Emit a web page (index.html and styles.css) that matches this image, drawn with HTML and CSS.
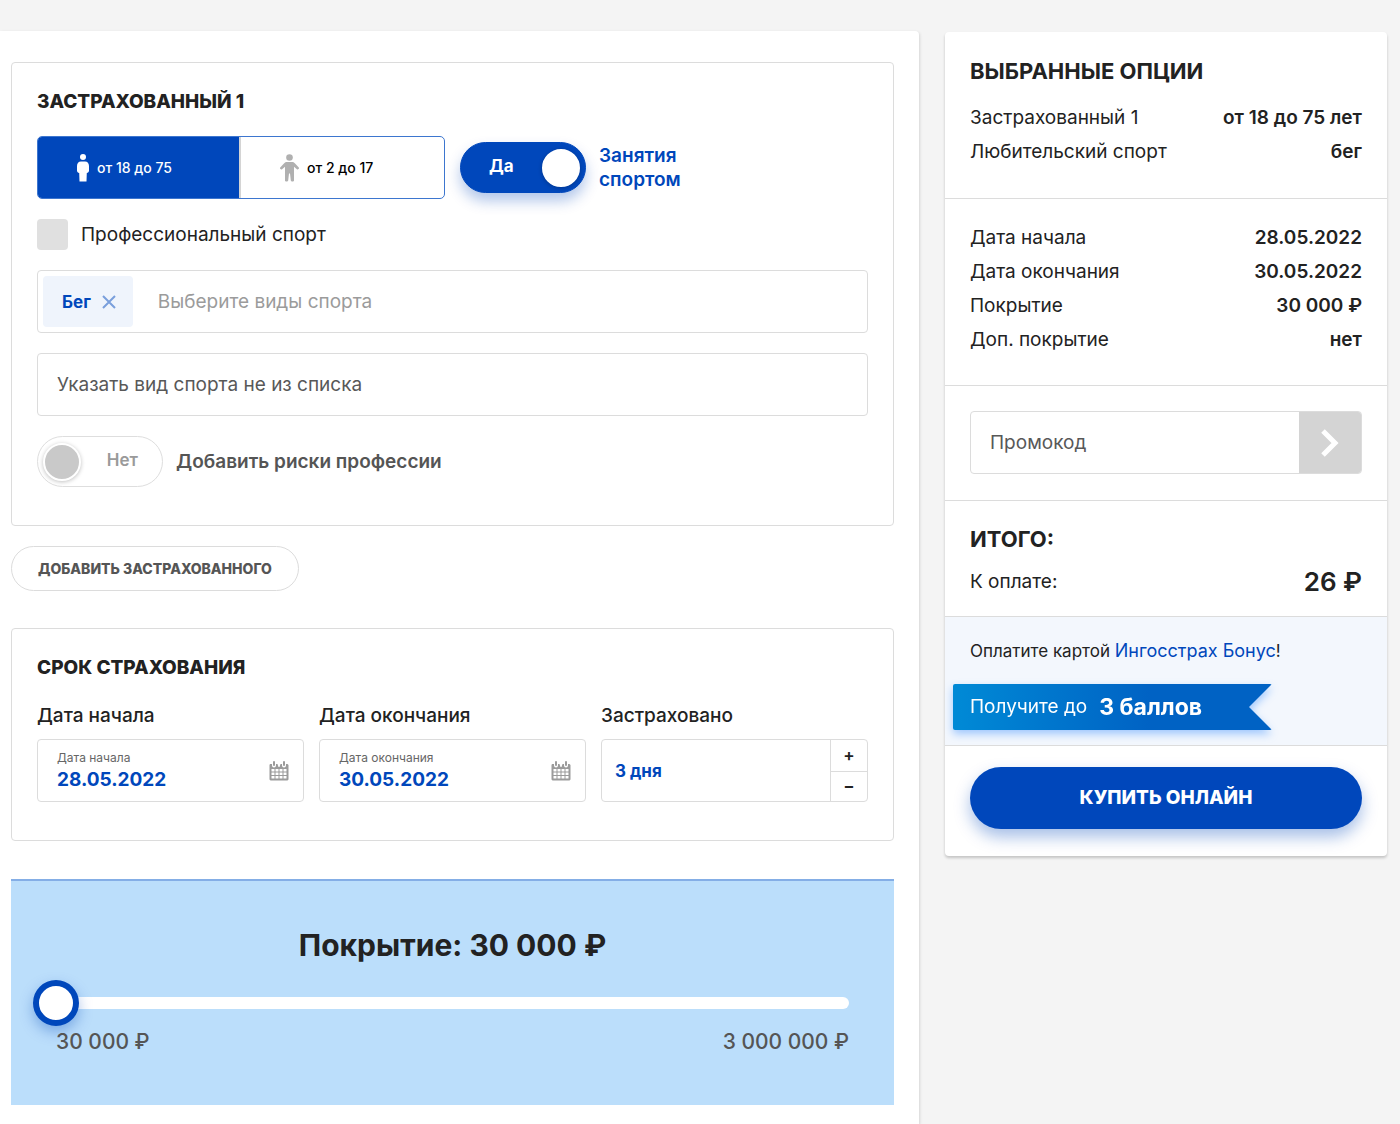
FILE: index.html
```html
<!DOCTYPE html>
<html lang="ru">
<head>
<meta charset="utf-8">
<meta name="viewport" content="width=device-width, initial-scale=1">
<title>Страхование путешественников</title>
<link rel="stylesheet" href="styles.css">
</head>
<body>
<div class="page">
  <main class="panel">
    <section class="card insured">
      <h2 class="card-title">ЗАСТРАХОВАННЫЙ 1</h2>
      <div class="insured-row">
        <div class="segment" role="radiogroup" aria-label="Возраст">
          <label class="segment-item">
            <input class="segment-input" type="radio" name="age" checked>
            <svg class="icon-adult" viewBox="0 0 12 28" width="12" height="28" aria-hidden="true"><circle cx="6" cy="3" r="3"/><path d="M4 7.500h4c2.500 0 4 2 4 4.500v4.500c0 1.500-1 2.500-2.200 2.500L9.500 27.500h-7L2.200 19C1 19 0 18 0 16.500V12c0-2.500 1.500-4.500 4-4.500z"/></svg>
            <span>от 18 до 75</span>
          </label>
          <label class="segment-item">
            <input class="segment-input" type="radio" name="age">
            <svg class="icon-child" viewBox="0 0 19 28" width="19" height="28" aria-hidden="true"><circle cx="9.500" cy="3.500" r="3.300"/><path d="M7 8h5c1.200 0 2 .5 2.800 1.200l4 4.300c.8 1-.8 2.600-1.900 1.700L14 12.800V26.500c0 1.400-3 1.400-3.200 0L10 19.500H9l-.8 7c-.2 1.400-3.200 1.400-3.200 0V12.800l-2.900 2.400c-1.100.9-2.700-.7-1.900-1.700l4-4.300C5 8.500 5.800 8 7 8z"/></svg>
            <span>от 2 до 17</span>
          </label>
        </div>
        <label class="toggle-field toggle-field-on">
          <span class="toggle">
            <input class="toggle-input" type="checkbox" role="switch" checked>
            <span class="toggle-text">Да</span>
          </span>
          <span class="toggle-caption">Занятия<br>спортом</span>
        </label>
      </div>
      <label class="check">
        <input class="check-input" type="checkbox">
        <span>Профессиональный спорт</span>
      </label>
      <div class="field tags">
        <button class="tag" type="button">Бег
          <svg viewBox="0 0 14 14" width="14" height="14" aria-hidden="true"><path d="M1 1l12 12M13 1L1 13"/></svg>
        </button>
        <input class="field-input" type="text" placeholder="Выберите виды спорта" aria-label="Виды спорта">
      </div>
      <div class="field">
        <input class="field-input field-input-strong" type="text" placeholder="Указать вид спорта не из списка" aria-label="Указать вид спорта не из списка">
      </div>
      <label class="toggle-field">
        <span class="toggle">
          <input class="toggle-input" type="checkbox" role="switch">
          <span class="toggle-text">Нет</span>
        </span>
        <span class="toggle-caption">Добавить риски профессии</span>
      </label>
    </section>

    <button class="add-button" type="button">ДОБАВИТЬ ЗАСТРАХОВАННОГО</button>

    <section class="card term">
      <h2 class="card-title">СРОК СТРАХОВАНИЯ</h2>
      <div class="term-grid">
        <div class="term-col">
          <h3 class="term-name">Дата начала</h3>
          <div class="field date">
            <div class="date-body">
              <label class="date-label" for="start">Дата начала</label>
              <input class="date-input" id="start" type="text" value="28.05.2022">
            </div>
            <svg class="calendar" viewBox="0 0 20 20" width="20" height="20" aria-hidden="true"><use href="#calendar"/></svg>
          </div>
        </div>
        <div class="term-col">
          <h3 class="term-name">Дата окончания</h3>
          <div class="field date">
            <div class="date-body">
              <label class="date-label" for="end">Дата окончания</label>
              <input class="date-input" id="end" type="text" value="30.05.2022">
            </div>
            <svg class="calendar" viewBox="0 0 20 20" width="20" height="20" aria-hidden="true"><use href="#calendar"/></svg>
          </div>
        </div>
        <div class="term-col">
          <h3 class="term-name"><label for="days">Застраховано</label></h3>
          <div class="field days">
            <input class="days-input" id="days" type="text" value="3 дня">
            <div class="days-steps">
              <button class="step" type="button" aria-label="Больше">+</button>
              <button class="step" type="button" aria-label="Меньше">−</button>
            </div>
          </div>
        </div>
      </div>
    </section>

    <section class="coverage">
      <h2 class="coverage-title"><label for="sum">Покрытие: 30 000 ₽</label></h2>
      <input class="slider" id="sum" type="range" min="30000" max="3000000" value="30000">
      <div class="coverage-scale"><span>30 000 ₽</span><span>3 000 000 ₽</span></div>
    </section>
  </main>

  <aside class="summary">
    <section class="part options">
      <h2 class="summary-title">ВЫБРАННЫЕ ОПЦИИ</h2>
      <dl class="rows">
        <div class="row"><dt>Застрахованный 1</dt><dd>от 18 до 75 лет</dd></div>
        <div class="row"><dt>Любительский спорт</dt><dd>бег</dd></div>
      </dl>
    </section>
    <section class="part details">
      <dl class="rows">
        <div class="row"><dt>Дата начала</dt><dd>28.05.2022</dd></div>
        <div class="row"><dt>Дата окончания</dt><dd>30.05.2022</dd></div>
        <div class="row"><dt>Покрытие</dt><dd>30 000 ₽</dd></div>
        <div class="row"><dt>Доп. покрытие</dt><dd>нет</dd></div>
      </dl>
    </section>
    <section class="part promo">
      <div class="field promo-field">
        <input class="field-input field-input-strong" type="text" placeholder="Промокод" aria-label="Промокод">
        <button class="promo-button" type="button" aria-label="Применить">
          <svg viewBox="0 0 18 28" width="18" height="28" aria-hidden="true"><path d="M2 2l12 12L2 26"/></svg>
        </button>
      </div>
    </section>
    <section class="part total">
      <h2 class="summary-title">ИТОГО:</h2>
      <dl class="rows">
        <div class="row"><dt>К оплате:</dt><dd class="price">26 ₽</dd></div>
      </dl>
    </section>
    <section class="part bonus">
      <p class="bonus-text">Оплатите картой <a class="bonus-link" href="#">Ингосстрах Бонус</a>!</p>
      <div class="ribbon-shadow">
        <p class="ribbon">Получите до <strong class="ribbon-points">3 баллов</strong></p>
      </div>
    </section>
    <div class="buy">
      <button class="buy-button" type="button">КУПИТЬ ОНЛАЙН</button>
    </div>
  </aside>
</div>

<svg class="sprite" width="0" height="0" aria-hidden="true">
  <symbol id="calendar" viewBox="0 0 20 20">
    <path fill="#9b9b9b" fill-rule="evenodd" d="M1 3h2v1.500a2 2 0 0 0 4 0V3h1.500v0l1 3h1l1-3H13v1.500a2 2 0 0 0 4 0V3h1.500L19.500 4v14.500l-1 1h-17l-1-1V4zM2.500 8v2.500h3V8zm4 0v2.500h3V8zm4 0v2.500h3V8zm4 0v2.500h3V8zm-12 3.500V14h3v-2.500zm4 0V14h3v-2.500zm4 0V14h3v-2.500zm4 0V14h3v-2.500zm-12 3.500v2.500h3V15zm4 0v2.500h3V15zm4 0v2.500h3V15zm4 0v2.500h3V15z"/>
    <rect x="4" y="0" width="2" height="5" rx="1" fill="#9b9b9b"/>
    <rect x="14" y="0" width="2" height="5" rx="1" fill="#9b9b9b"/>
  </symbol>
</svg>
</body>
</html>
```
FILE: styles.css
```css
*, ::before {
  box-sizing: border-box;
}

body {
  margin: 0;
  background: #f4f4f4;
  color: #222;
  font: 400 19px/24px Inter, "Open Sans", "Liberation Sans", sans-serif;
}

h2, h3, p, dl, dd {
  margin: 0;
}

input, button {
  margin: 0;
  border: 0;
  padding: 0;
  background: none;
  color: inherit;
  font: inherit;
}

button {
  cursor: pointer;
}

.sprite {
  position: absolute;
}

.page {
  display: grid;
  grid-template-columns: minmax(0, 1fr) 442px;
  align-items: start;
  gap: 26px;
  padding: 31px 13px 0 0;
}

.panel {
  display: flex;
  flex-direction: column;
  min-height: calc(100vh - 31px);
  padding: 31px 25px 18px 11px;
  background: #fff;
  border-radius: 0 4px 0 0;
  box-shadow: 1px 1px 3px rgba(0, 0, 0, .12);
}

/* Cards */

.card {
  border: 1px solid #dcdcdc;
  border-radius: 4px;
  padding: 27px 25px 38px;
}

.card-title {
  font-size: 19px;
  line-height: 24px;
  font-weight: 800;
}

.insured {
  display: flex;
  flex-direction: column;
  align-items: stretch;
  gap: 20px;
}

.insured-row {
  display: flex;
  align-items: center;
  gap: 15px;
  padding-top: 2px;
}

/* Age switch */

.segment {
  display: grid;
  grid-template-columns: 1fr 1fr;
  width: 408px;
  height: 63px;
  border: 1px solid #3d76cf;
  border-radius: 5px;
  overflow: hidden;
}

.segment-item {
  display: flex;
  align-items: center;
  gap: 8px;
  padding-left: 39px;
  color: #000;
  font-size: 14px;
  font-weight: 500;
  cursor: pointer;
}

.segment-item:first-child {
  border-right: 2px solid #d4d4d4;
}

.segment-item:has(:checked) {
  background: #0047bb;
  background-clip: padding-box;
  color: #fff;
}

.segment-input {
  position: absolute;
  opacity: 0;
}

.icon-adult {
  fill: #fff;
}

.icon-child {
  fill: #b0b0b0;
}

/* Toggles */

.toggle-field {
  display: flex;
  align-items: center;
  gap: 13px;
  color: #555;
  font-weight: 600;
  cursor: pointer;
}

.toggle {
  display: grid;
  align-items: center;
  width: 126px;
  height: 51px;
}

.toggle-input {
  grid-area: 1 / 1;
  display: flex;
  align-items: center;
  width: 126px;
  height: 51px;
  padding: 0 5px;
  appearance: none;
  border: 1px solid #dedede;
  border-radius: 26px;
  background: #fff;
}

.toggle-input::before {
  content: "";
  width: 38px;
  height: 38px;
  border: 2px solid #fff;
  border-radius: 50%;
  background: #c9c9c9;
  box-shadow: 0 1px 4px rgba(0, 0, 0, .25);
}

.toggle-input:checked {
  justify-content: flex-end;
  border-color: #0047bb;
  background: #0047bb;
  box-shadow: 0 8px 14px rgba(0, 71, 187, .3);
}

.toggle-input:checked::before {
  background: #fff;
}

.toggle-text {
  grid-area: 1 / 1;
  z-index: 1;
  justify-self: end;
  padding: 0 25px 3px 0;
  color: #9a9a9a;
  font-size: 17px;
  pointer-events: none;
}

.toggle-input:checked + .toggle-text {
  justify-self: start;
  padding-left: 29px;
  color: #fff;
  font-weight: 700;
}

.toggle-field-on {
  color: #0047bb;
}

/* Checkbox */

.check {
  display: flex;
  align-items: center;
  gap: 13px;
}

.check-input {
  width: 31px;
  height: 31px;
  appearance: none;
  border-radius: 4px;
  background: #e0e0e0;
}

.check-input:checked {
  background: #0047bb;
}

/* Fields */

.field {
  display: flex;
  height: 63px;
  border: 1px solid #dcdcdc;
  border-radius: 4px;
  background: #fff;
}

.field-input {
  flex: 1;
  min-width: 0;
  padding: 0 19px;
  outline: 0;
}

.field-input::placeholder {
  color: #9b9b9b;
  opacity: 1;
}

.field-input-strong::placeholder {
  color: #585858;
}

.tags {
  align-items: center;
  gap: 6px;
  padding-left: 5px;
}

.tag {
  display: flex;
  align-items: center;
  gap: 11px;
  height: 51px;
  padding: 0 17px 0 19px;
  border-radius: 4px;
  background: #eff4fc;
  color: #0047bb;
  font-size: 17px;
  font-weight: 700;
}

.tag svg {
  fill: none;
  stroke: #7a9fdc;
  stroke-width: 2;
}

.add-button {
  align-self: flex-start;
  height: 45px;
  margin: 20px 0 37px;
  padding: 0 26px;
  border: 1px solid #dcdcdc;
  border-radius: 23px;
  color: #555;
  font-size: 14px;
  font-weight: 800;
}

/* Insurance term */

.term-grid {
  display: grid;
  grid-template-columns: repeat(3, minmax(0, 1fr));
  gap: 15px;
  margin-top: 24px;
}

.term-col {
  display: flex;
  flex-direction: column;
  gap: 11px;
}

.term-name {
  font-size: 19px;
  line-height: 24px;
  font-weight: 500;
}

.date {
  align-items: center;
  padding: 0 14px 0 19px;
}

.date-body {
  display: flex;
  flex: 1;
  flex-direction: column;
  min-width: 0;
  padding-bottom: 2px;
}

.date-label {
  color: #666;
  font-size: 12px;
  line-height: 20px;
}

.date-input {
  width: 100%;
  height: 24px;
  color: #0047bb;
  font-weight: 700;
}

.days-input {
  flex: 1;
  min-width: 0;
  padding-left: 13px;
  color: #0047bb;
  font-size: 17px;
  font-weight: 700;
}

.days-steps {
  display: grid;
  grid-template-rows: 1fr 1fr;
  width: 37px;
  border-left: 1px solid #dcdcdc;
}

.step {
  font-size: 17px;
  line-height: 20px;
  font-weight: 600;
}

.step + .step {
  border-top: 1px solid #dcdcdc;
}

/* Coverage */

.coverage {
  display: flex;
  flex-direction: column;
  margin-top: 38px;
  padding: 46px 45px 51px;
  border-top: 2px solid #84aee6;
  background: #bbdefb;
}

.coverage-title {
  font-size: 30px;
  line-height: 36px;
  font-weight: 700;
  text-align: center;
}

.slider {
  height: 46px;
  margin: 17px 0 0 -23px;
  appearance: none;
}

.slider::-webkit-slider-runnable-track {
  height: 12px;
  border-radius: 6px;
  background: linear-gradient(to right, transparent 23px, #fff 23px);
}

.slider::-webkit-slider-thumb {
  width: 46px;
  height: 46px;
  margin-top: -17px;
  appearance: none;
  border: 6px solid #0047bb;
  border-radius: 50%;
  background: #fff;
  box-shadow: 0 6px 14px rgba(0, 71, 187, .35);
}

.coverage-scale {
  display: flex;
  justify-content: space-between;
  margin-top: 4px;
  color: #555;
  font-size: 21px;
  line-height: 24px;
  font-weight: 500;
}

/* Summary */

.summary {
  margin-top: 1px;
  border-radius: 4px;
  background: #fff;
  box-shadow: 0 2px 3px rgba(0, 0, 0, .2);
}

.part {
  padding: 0 25px;
  border-bottom: 1px solid #dcdcdc;
}

.summary-title {
  font-size: 22px;
  line-height: 28px;
  font-weight: 700;
}

.row {
  display: flex;
  align-items: center;
  justify-content: space-between;
  line-height: 34px;
}

.row dd {
  font-weight: 600;
}

.options {
  padding-top: 25px;
  padding-bottom: 29px;
}

.options .rows {
  margin-top: 16px;
}

.details {
  padding-top: 22px;
  padding-bottom: 28px;
}

.promo {
  padding-top: 25px;
  padding-bottom: 26px;
}

.promo-field {
  overflow: hidden;
}

.promo-button {
  display: flex;
  align-items: center;
  justify-content: center;
  width: 62px;
  background: #d4d4d4;
}

.promo-button svg {
  fill: none;
  stroke: #fff;
  stroke-width: 5;
}

.total {
  padding-top: 24px;
  padding-bottom: 17px;
}

.total .rows {
  margin-top: 12px;
}

.total .price {
  font-size: 26px;
}

.bonus {
  padding: 22px 8px 15px;
  background: #f3f7fd;
}

.bonus-text {
  padding-left: 17px;
  font-size: 17px;
}

.bonus-link {
  color: #0047bb;
  font-size: 18px;
  text-decoration: none;
}

.ribbon-shadow {
  margin-top: 21px;
  filter: drop-shadow(0 4px 4px rgba(0, 110, 255, .35));
}

.ribbon {
  display: flex;
  align-items: center;
  gap: 12px;
  width: 319px;
  height: 46px;
  padding-left: 17px;
  border-radius: 2px;
  background: linear-gradient(to right, #008ad6, #0062c4 62%);
  color: #fff;
  clip-path: polygon(0 0, 100% 0, calc(100% - 23px) 50%, 100% 100%, 0 100%);
}

.ribbon-points {
  font-size: 23px;
  font-weight: 700;
}

.buy {
  padding: 21px 25px 27px;
}

.buy-button {
  width: 100%;
  height: 62px;
  border-radius: 31px;
  background: #0047bb;
  box-shadow: 0 8px 16px rgba(0, 71, 187, .35);
  color: #fff;
  font-weight: 800;
}
```
